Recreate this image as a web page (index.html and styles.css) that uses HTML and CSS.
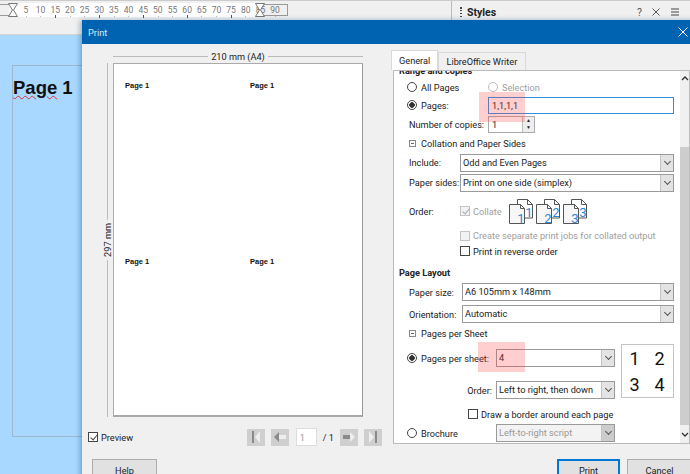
FILE: index.html
```html
<!DOCTYPE html>
<html lang="en">
<head>
    <meta charset="UTF-8">
    <title>Print</title>
    <link rel="stylesheet" href="styles.css">
</head>
<body>
    <div class="topbar">
        <div class="ruler">
            <span>5</span><span>10</span><span class="tick">15</span><span>20</span><span>25</span><span class="tick">30</span>
            <span>35</span><span>40</span><span class="tick">45</span><span>50</span><span>55</span><span class="tick">60</span>
            <span>65</span><span>70</span><span class="tick">75</span><span>80</span><span>85</span><span>90</span>
            <div class="ruler-start"></div>
            <div class="ruler-end"></div>
            <svg class="marker marker-left" width="10" height="14" viewBox="0 0 10 14"><path d="M.5.500h9L5.500 7l4 6.500h-9l4-6.500z" fill="#fff" stroke="#777"/></svg>
            <svg class="marker marker-right" width="10" height="14" viewBox="0 0 10 14"><path d="M.5.500h9L5.500 7l4 6.500h-9l4-6.500z" fill="#fff" stroke="#777"/></svg>
        </div>
        <div class="styles-head">
            <div class="grip"></div>
            <b>Styles</b>
            <span class="head-icons">
                <span>?</span>
                <svg width="8" height="8" viewBox="0 0 8 8"><path d="M.5.500l7 7M7.500.500l-7 7" stroke="#555" fill="none"/></svg>
                <svg width="10" height="8" viewBox="0 0 10 8"><path d="M1 1h8M1 4h8M1 7h8" stroke="#444" fill="none"/></svg>
            </span>
        </div>
    </div>
    <div class="doc">
        <div class="doc-page"><span class="doc-title"><u>Page</u> 1</span></div>
    </div>

    <div class="dialog">
        <div class="titlebar">
            <span>Print</span>
            <svg width="10" height="10" viewBox="0 0 10 10"><path d="M.5.500l9 9M9.500.500l-9 9" stroke="#fff" fill="none"/></svg>
        </div>
        <div class="dialog-body">
            <div class="preview-col">
                <div class="width-label"><span>210 mm (A4)</span></div>
                <div class="preview-main">
                    <div class="height-label"><span>297 mm</span></div>
                    <div class="sheet">
                        <b>Page 1</b><b>Page 1</b><b>Page 1</b><b>Page 1</b>
                    </div>
                </div>
                <div class="preview-foot">
                    <label class="check"><i class="box checked"></i>Preview</label>
                    <div class="pager">
                        <button class="nav"><svg width="10" height="12" viewBox="0 0 10 12"><path d="M1 0h2v12H1z" fill="#8a8a8a"/><path d="M9 0v12L4 6z" fill="#eee"/></svg></button>
                        <button class="nav"><svg width="12" height="10" viewBox="0 0 12 10"><path d="M0 5l5-5v10z" fill="#8a8a8a"/><path d="M5 3h7v4H5z" fill="#eee"/></svg></button>
                        <input class="page-input" value="1">
                        <span>/ 1</span>
                        <button class="nav"><svg width="12" height="10" viewBox="0 0 12 10"><path d="M0 3h7v4H0z" fill="#8a8a8a"/><path d="M12 5L7 0v10z" fill="#eee"/></svg></button>
                        <button class="nav"><svg width="10" height="12" viewBox="0 0 10 12"><path d="M1 0v12l5-6z" fill="#eee"/><path d="M7 0h2v12H7z" fill="#8a8a8a"/></svg></button>
                    </div>
                </div>
            </div>

            <div class="options-col">
                <div class="tabs">
                    <div class="tab active">General</div>
                    <div class="tab">LibreOffice Writer</div>
                </div>
                <div class="panel">
                    <div class="form">
                        <div class="row h-heading"><b>Range and copies</b></div>
                        <div class="row h-18">
                            <span class="radio"></span><span class="radio-text w-all">All Pages</span>
                            <span class="radio off"></span><span class="radio-text off">Selection</span>
                        </div>
                        <div class="row h-18">
                            <span class="radio on"></span><span class="radio-text w-all">Pages:</span>
                            <div class="field focus">1,1,1,1</div>
                        </div>
                        <div class="row h-20">
                            <span class="label w-copies">Number of copies:</span>
                            <div class="spin"><span>1</span><div class="spin-btns"><i>&#9650;</i><i>&#9660;</i></div></div>
                        </div>
                        <div class="row h-18"><span class="minus"></span><span>Collation and Paper Sides</span></div>
                        <div class="row h-21">
                            <span class="label w-label">Include:</span>
                            <div class="select"><span>Odd and Even Pages</span><i class="arrow"></i></div>
                        </div>
                        <div class="row h-19">
                            <span class="label w-label">Paper sides:</span>
                            <div class="select"><span>Print on one side (simplex)</span><i class="arrow"></i></div>
                        </div>
                        <div class="row order-row">
                            <span class="label w-label">Order:</span>
                            <label class="check off collate"><i class="box checked"></i>Collate</label>
                            <div class="collate-icons">
                                <svg width="24" height="25" viewBox="0 0 24 25"><path d="M8.500.5h10l5 5V19h-15z" fill="#fff" stroke="#555"/><path d="M.5 5.500h11l4 4v15H.5z" fill="#f7f7f7" stroke="#555"/><path d="M18.500.5v5h5M11.500 5.500v4h4" fill="none" stroke="#555"/><text x="20" y="18" class="digit">1</text><text x="12" y="24" class="digit">1</text></svg>
                                <svg width="24" height="25" viewBox="0 0 24 25"><path d="M8.500.5h10l5 5V19h-15z" fill="#fff" stroke="#555"/><path d="M.5 5.500h11l4 4v15H.5z" fill="#f7f7f7" stroke="#555"/><path d="M18.500.5v5h5M11.500 5.500v4h4" fill="none" stroke="#555"/><text x="20" y="18" class="digit">2</text><text x="12" y="24" class="digit">2</text></svg>
                                <svg width="24" height="25" viewBox="0 0 24 25"><path d="M8.500.5h10l5 5V19h-15z" fill="#fff" stroke="#555"/><path d="M.5 5.500h11l4 4v15H.5z" fill="#f7f7f7" stroke="#555"/><path d="M18.500.5v5h5M11.500 5.500v4h4" fill="none" stroke="#555"/><text x="20" y="18" class="digit">3</text><text x="12" y="24" class="digit">3</text></svg>
                            </div>
                        </div>
                        <div class="row sub-row mt-4"><label class="check off"><i class="box"></i>Create separate print jobs for collated output</label></div>
                        <div class="row sub-row"><label class="check"><i class="box"></i>Print in reverse order</label></div>
                        <div class="row heading-row"><b>Page Layout</b></div>
                        <div class="row h-18 mt-3">
                            <span class="label w-label-2">Paper size:</span>
                            <div class="select"><span>A6 105mm x 148mm</span><i class="arrow"></i></div>
                        </div>
                        <div class="row h-18 mt-4">
                            <span class="label w-label-2">Orientation:</span>
                            <div class="select"><span>Automatic</span><i class="arrow"></i></div>
                        </div>
                        <div class="row h-16 mt-2"><span class="minus"></span><span>Pages per Sheet</span></div>
                        <div class="sheet-block">
                            <div class="sheet-fields">
                                <div class="row h-18">
                                    <span class="radio on"></span><span class="radio-text w-sheet">Pages per sheet:</span>
                                    <div class="select"><span>4</span><i class="arrow"></i></div>
                                </div>
                                <div class="row h-18 order-2">
                                    <span class="w-order">Order:</span>
                                    <div class="select"><span>Left to right, then down</span><i class="arrow"></i></div>
                                </div>
                            </div>
                            <div class="layout-box"><span>1</span><span>2</span><span>3</span><span>4</span></div>
                        </div>
                        <div class="row border-row"><label class="check"><i class="box"></i>Draw a border around each page</label></div>
                        <div class="row h-18 mt-2">
                            <span class="radio"></span><span class="radio-text w-sheet">Brochure</span>
                            <div class="select disabled w-brochure"><span>Left-to-right script</span><i class="arrow"></i></div>
                        </div>
                    </div>
                    <div class="scrollbar">
                        <svg width="8" height="5" viewBox="0 0 8 5"><path d="M1 4l3-3 3 3" stroke="#333" stroke-width="1.300" fill="none"/></svg>
                        <div class="thumb"></div>
                        <svg width="8" height="5" viewBox="0 0 8 5"><path d="M1 1l3 3 3-3" stroke="#333" stroke-width="1.300" fill="none"/></svg>
                    </div>
                    <div class="mark mark-pages"></div>
                    <div class="mark mark-sheet"></div>
                </div>
            </div>
        </div>
        <div class="dialog-foot">
            <button class="btn">Help</button>
            <div class="foot-right">
                <button class="btn primary">Print</button>
                <button class="btn">Cancel</button>
            </div>
        </div>
    </div>
</body>
</html>
```
FILE: styles.css
```css
* {
    box-sizing: border-box;
}
body {
    margin: 0;
    width: 690px;
    height: 474px;
    overflow: hidden;
    position: relative;
    background-color: #f0f0f0;
    color: #222;
    font-family: "Roboto", sans-serif;
    font-size: 9.200px;
}
button, input {
    font-family: inherit;
    font-size: inherit;
    color: inherit;
}

/* writer window behind the dialog */
.topbar {
    display: flex;
    height: 35px;
    border-top: 1px solid #ccc;
    border-bottom: 1px solid #d4d4d4;
}
.ruler {
    position: relative;
    display: flex;
    width: 288px;
    height: 14px;
    margin-top: 2px;
    padding-left: 18.600px;
    background: linear-gradient(to right, #f0f0f0, #f0f0f0 8px, #fff 14px, #fff 260px, #f0f0f0 260px);
    color: #777;
    font-size: 8.500px;
    line-height: 14px;
}
.ruler span {
    position: relative;
    flex: none;
    width: 14.670px;
    text-align: center;
}
.ruler span::after {
    content: "";
    position: absolute;
    left: 7px;
    top: 13px;
    width: 1px;
    height: 1px;
    background-color: #bbb;
}
.ruler .tick::after {
    top: 12px;
    height: 3px;
    background-color: #555;
}
.ruler-start {
    position: absolute;
    left: 0;
    top: 1px;
    width: 9px;
    height: 12px;
    border-top: 1px solid #999;
    border-bottom: 1px solid #999;
}
.ruler-end {
    position: absolute;
    left: 260px;
    top: 1px;
    width: 28px;
    height: 12px;
    border: 1px solid #999;
}
.marker {
    position: absolute;
    top: 0;
}
.marker-left {
    left: 8px;
}
.marker-right {
    left: 255px;
}
.styles-head {
    display: flex;
    align-items: center;
    width: 239px;
    height: 20px;
    margin-left: 163px;
    padding: 2px 10px 0 8px;
    border-left: 1px solid #bbb;
    font-size: 10.500px;
}
.grip {
    width: 2px;
    height: 10px;
    margin-right: 5px;
    background: repeating-linear-gradient(#444 0 1.500px, transparent 1.500px 3px);
}
.head-icons {
    display: flex;
    align-items: center;
    gap: 10px;
    margin-left: auto;
    color: #555;
}
.doc {
    height: 439px;
    padding: 30px 0 0 12px;
    background-color: #a8d8ff;
}
.doc-page {
    height: 372px;
    padding-top: 11px;
    border: 1px solid #9db7cc;
    font-family: "Liberation Sans", sans-serif;
    font-size: 18.500px;
    font-weight: bold;
    color: #111;
}
.doc-title {
    white-space: nowrap;
}
.doc-title u {
    text-decoration: underline wavy #d33 1px;
}

/* print dialog */
.dialog {
    position: absolute;
    left: 82px;
    top: 20px;
    width: 620px;
    height: 470px;
    background-color: #f0f0f0;
    box-shadow: -2px 0 5px rgba(0, 60, 110, .35);
}
.titlebar {
    display: flex;
    align-items: center;
    justify-content: space-between;
    height: 24px;
    padding: 0 14px 0 6px;
    background-color: #0063b1;
    color: #dbe9f5;
}
.dialog-body {
    display: flex;
}
.preview-col {
    width: 309px;
    padding: 6px 0 0 6px;
}
.width-label {
    display: flex;
    align-items: center;
    justify-content: center;
    width: 250px;
    height: 13px;
    margin-left: 25px;
    background: linear-gradient(#bbb, #bbb) center / 100% 1px no-repeat;
}
.width-label span {
    padding: 0 3px;
    background-color: #f0f0f0;
}
.preview-main {
    display: flex;
    height: 354px;
}
.height-label {
    display: flex;
    align-items: center;
    justify-content: center;
    width: 25px;
    padding-left: 14px;
    background: linear-gradient(#bbb, #bbb) 19px 0 / 1px 100% no-repeat;
}
.height-label span {
    padding: 3px 0;
    background-color: #f0f0f0;
    writing-mode: vertical-rl;
    transform: rotate(180deg);
    white-space: nowrap;
}
.sheet {
    display: grid;
    grid-template-columns: 125px 110px;
    grid-template-rows: 176px 100px;
    width: 250px;
    height: 354px;
    padding: 17px 0 0 11px;
    background-color: #fff;
    border: 1px solid #aaa;
    border-right-color: #999;
    border-bottom-width: 2px;
    font-family: "Liberation Sans", sans-serif;
    font-size: 7.500px;
    color: #111;
}
.preview-foot {
    display: flex;
    align-items: center;
    height: 18px;
    margin-top: 11px;
}
.pager {
    display: flex;
    align-items: center;
    gap: 6px;
    margin-left: auto;
    margin-right: 9px;
}
.nav {
    display: flex;
    align-items: center;
    justify-content: center;
    width: 18px;
    height: 17px;
    padding: 0;
    border: none;
    background-color: #cfcfcf;
}
.page-input {
    width: 21px;
    height: 18px;
    margin-left: 1px;
    padding: 0 0 0 3px;
    border: 1px solid #ddd;
    color: #999;
    background-color: #fff;
}
.options-col {
    width: 297px;
    padding-top: 6px;
}
.tabs {
    display: flex;
    align-items: flex-end;
    height: 20px;
}
.tab {
    display: flex;
    align-items: center;
    height: 18px;
    padding: 0 7.500px;
    border: 1px solid #d9d9d9;
    border-bottom: none;
    white-space: nowrap;
}
.tab.active {
    width: 47px;
    height: 20px;
    padding-left: 7px;
    background-color: #fff;
}
.panel {
    position: relative;
    display: flex;
    width: 297px;
    height: 374px;
    margin-left: 2px;
    border: 1px solid #bbb;
    background-color: #fff;
    overflow: hidden;
}
.form {
    flex: none;
    width: 286px;
    margin-top: -8px;
    padding: 0 6px 0 13px;
}
.scrollbar {
    display: flex;
    flex-direction: column;
    align-items: center;
    flex: none;
    width: 10px;
    padding-top: 5px;
    background-color: #f0f0f0;
}
.thumb {
    flex: none;
    width: 100%;
    height: 278px;
    margin: 66px 0 7px;
    background-color: #cdcdcd;
}
.row {
    display: flex;
    align-items: center;
    white-space: nowrap;
}
.h-heading {
    height: 15px;
    margin-left: -8px;
}
.heading-row {
    height: 16px;
    margin: 5px 0 0 -8px;
}
.h-16 { height: 16px; }
.h-18 { height: 18px; }
.h-19 { height: 19px; }
.h-20 { height: 20px; }
.h-21 { height: 21px; }
.mt-2 { margin-top: 2px; }
.mt-3 { margin-top: 3px; }
.mt-4 { margin-top: 4px; }
.order-row {
    height: 26px;
    margin-top: 6px;
}
.sub-row {
    height: 15.500px;
    padding-left: 53px;
}
.border-row {
    height: 16px;
    margin-top: 7px;
    padding-left: 61px;
}
.radio {
    flex: none;
    width: 10px;
    height: 10px;
    margin-right: 4px;
    border: 1px solid #444;
    border-radius: 50%;
    background-color: #fff;
}
.radio.on {
    background: radial-gradient(circle, #333 0 2.500px, #fff 3px);
}
.radio.off {
    border-color: #bbb;
}
.radio-text.off {
    color: #a0a0a0;
}
.w-all {
    width: 67px;
}
.w-copies {
    width: 79px;
}
.w-label {
    width: 51px;
}
.w-label-2 {
    width: 53px;
}
.w-sheet {
    flex: none;
    width: 75px;
}
.w-order {
    flex: none;
    width: 89px;
    padding-right: 4px;
    text-align: right;
}
.label {
    flex: none;
    margin-left: 2px;
}
.field {
    width: 186px;
    height: 17px;
    padding: 0 3px;
    border: 1px solid #8a8a8a;
    line-height: 15px;
}
.field.focus {
    border-color: #2f8fdc;
}
.spin {
    display: flex;
    justify-content: space-between;
    width: 47px;
    height: 17px;
    padding-left: 3px;
    border: 1px solid #aaa;
    line-height: 15px;
}
.spin-btns {
    display: flex;
    flex-direction: column;
    width: 12px;
    border-left: 1px solid #bbb;
    background-color: #eee;
    font-size: 5px;
    line-height: 7.500px;
    text-align: center;
}
.spin-btns i {
    font-style: normal;
}
.minus {
    width: 7px;
    height: 7px;
    margin: 0 5px 0 2px;
    border: 1px solid #888;
    background: linear-gradient(#666, #666) center / 3px 1px no-repeat;
}
.select {
    display: flex;
    justify-content: space-between;
    flex: 1;
    height: 18px;
    padding-left: 2px;
    border: 1px solid #9a9a9a;
    background-color: #fff;
    line-height: 16px;
}
.arrow {
    position: relative;
    flex: none;
    width: 13px;
    background-color: #e3e3e3;
    border-left: 1px solid #c4c4c4;
}
.arrow::after {
    content: "";
    position: absolute;
    left: 3.500px;
    top: 4px;
    width: 4px;
    height: 4px;
    border-right: 1px solid #555;
    border-bottom: 1px solid #555;
    transform: rotate(45deg);
}
.select.disabled {
    background-color: #f3f3f3;
    color: #999;
}
.select.disabled .arrow {
    background-color: #ccc;
}
.w-brochure {
    flex: none;
    width: 119px;
}
.check {
    display: flex;
    align-items: center;
}
.check.off {
    color: #a0a0a0;
}
.box {
    position: relative;
    flex: none;
    width: 10px;
    height: 10px;
    margin-right: 3px;
    border: 1px solid #444;
    background-color: #fff;
}
.box.checked::after {
    content: "";
    position: absolute;
    left: 2.500px;
    top: 0;
    width: 3px;
    height: 6px;
    border-right: 1px solid #444;
    border-bottom: 1px solid #444;
    transform: rotate(40deg);
}
.check.off .box {
    border-color: #c4c4c4;
    background-color: #f2f2f2;
}
.check.off .box.checked::after {
    border-color: #aaa;
}
.collate {
    width: 49px;
}
.collate-icons {
    display: flex;
    gap: 3px;
}
.collate-icons svg {
    overflow: visible;
}
.digit {
    font-size: 13px;
    fill: #2b88d8;
    text-anchor: middle;
}
.sheet-block {
    display: flex;
    gap: 6px;
    margin-top: 3px;
}
.sheet-fields {
    flex: none;
    width: 208px;
    padding-top: 5px;
}
.order-2 {
    margin-top: 14px;
}
.layout-box {
    display: grid;
    grid-template-columns: 1fr 1fr;
    align-items: center;
    justify-items: center;
    width: 53px;
    height: 54px;
    padding-right: 1px;
    border: 1px solid #c4c4c4;
    font-size: 18px;
    color: #111;
}
.mark {
    position: absolute;
    background-color: rgba(255, 60, 60, .25);
}
.mark-pages {
    left: 85px;
    top: 21px;
    width: 46px;
    height: 30px;
}
.mark-sheet {
    left: 84px;
    top: 271px;
    width: 47px;
    height: 30px;
}
.dialog-foot {
    display: flex;
    justify-content: space-between;
    height: 40px;
    padding: 13px 0 0 10px;
}
.btn {
    width: 65px;
    height: 24px;
    padding: 0;
    border: 1px solid #adadad;
    background-color: #e1e1e1;
    line-height: 20px;
}
.btn.primary {
    width: 63px;
    border: 2px solid #0078d7;
}
.foot-right {
    display: flex;
    gap: 7px;
    margin-right: 10px;
}
```
